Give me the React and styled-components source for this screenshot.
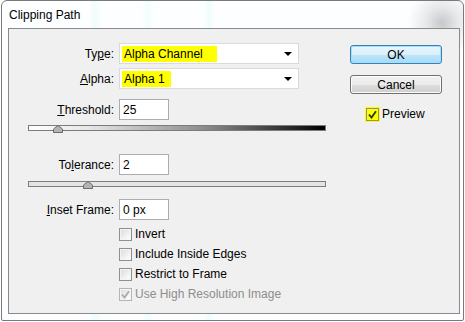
import React from 'react';
import styled, { createGlobalStyle } from 'styled-components';

const GlobalStyle = createGlobalStyle`
  html, body {
    margin: 0;
    padding: 0;
    background: #ffffff;
  }
  body {
    font-family: "Liberation Sans", Arial, sans-serif;
    font-size: 12px;
    color: #000;
  }
`;

const Window = styled.div`
  box-sizing: border-box;
  width: 463px;
  height: 321px;
  margin-left: 1px;
  border: 1px solid #7a7a7a;
  border-radius: 6px 6px 2px 2px;
  display: flex;
  flex-direction: column;
  background:
    radial-gradient(circle at 440px 22px, #c6c9cc 0, #e6e8ea 16px, rgba(255, 255, 255, 0) 34px),
    linear-gradient(90deg, rgba(255,255,255,0) 88px, #eefcfd 92px, rgba(255,255,255,0) 100px),
    linear-gradient(90deg, rgba(255,255,255,0) 140px, #f2fdfe 146px, rgba(255,255,255,0) 152px),
    linear-gradient(90deg, rgba(255,255,255,0) 202px, #eefcfd 207px, rgba(255,255,255,0) 212px),
    #fcfeff;
`;

const TitleBar = styled.div`
  height: 27px;
  display: flex;
  align-items: center;
  padding-left: 7px;
  font-size: 12px;
  color: #000;
`;

const Panel = styled.div`
  flex: 1;
  margin: 0 3px 6px 6px;
  border: 1px solid #8a8a8a;
  background: #f0f0f0;
  display: flex;
  padding: 14px 0 0 19px;
`;

const Form = styled.div`
  width: 298px;
  display: flex;
  flex-direction: column;
`;

const Row = styled.div`
  display: grid;
  grid-template-columns: 86px 180px;
  column-gap: 5px;
  align-items: center;
  margin-top: ${(p) => p.$mt || 0}px;
`;

const Label = styled.label`
  text-align: right;
  white-space: nowrap;
`;

const Select = styled.div`
  box-sizing: border-box;
  height: 21px;
  border: 1px solid #dadada;
  background: #fff;
  display: flex;
  align-items: center;
  justify-content: space-between;
  padding: 0 5px 0 2px;
`;

const Marked = styled.span`
  background: #ffff00;
  padding: 2px ${(p) => p.$pr}px 1px 2px;
  line-height: 13px;
`;

const Arrow = styled.span`
  width: 0;
  height: 0;
  border-left: 4px solid transparent;
  border-right: 4px solid transparent;
  border-top: 4px solid #000;
  margin-right: 1px;
`;

const TextInput = styled.div`
  box-sizing: border-box;
  width: 50px;
  height: 21px;
  border: 1px solid #abadb3;
  background: #fff;
  display: flex;
  align-items: center;
  padding-left: 3px;
`;

const Track = styled.div`
  position: relative;
  box-sizing: border-box;
  width: 298px;
  height: 6px;
  margin-top: ${(p) => p.$mt}px;
  border: 1px solid #7c7c7c;
  background: ${(p) =>
    p.$gradient
      ? 'linear-gradient(90deg, #ffffff 0%, #e6e6e6 20%, #8a8a8a 60%, #000000 100%)'
      : '#e4e4e4'};
`;

const Thumb = styled.svg`
  position: absolute;
  top: -1px;
  width: 10px;
  height: 8px;
`;

const Checks = styled.div`
  display: flex;
  flex-direction: column;
  margin-top: 4px;
  padding-left: 91px;
`;

const CheckRow = styled.div`
  height: 20px;
  display: flex;
  align-items: center;
  gap: 3px;
  color: ${(p) => (p.$disabled ? '#8d8d8d' : '#000')};
`;

const Box = styled.span`
  box-sizing: border-box;
  width: 13px;
  height: 13px;
  border: 1px solid ${(p) => (p.$disabled ? '#b5b5b5' : '#8e8f8f')};
  background: ${(p) =>
    p.$marked
      ? '#ffff00'
      : 'linear-gradient(135deg, #dadada 0%, #f6f6f6 70%, #ffffff 100%)'};
  box-shadow: ${(p) => (p.$marked ? 'none' : 'inset 0 0 0 1px #f4f4f4')};
  display: flex;
  align-items: center;
  justify-content: center;
  outline: ${(p) => (p.$marked ? '1px solid #ffff00' : 'none')};
`;

const Side = styled.div`
  width: 92px;
  margin-left: 24px;
  padding-top: 2px;
  display: flex;
  flex-direction: column;
`;

const Button = styled.div`
  box-sizing: border-box;
  height: 19px;
  border: 1px solid ${(p) => (p.$primary ? '#3c7fb1' : '#707070')};
  border-radius: 3px;
  background: ${(p) =>
    p.$primary
      ? 'linear-gradient(180deg, #eaf6fd 0%, #d9f0fc 50%, #bee6fd 51%, #a7d9f5 100%)'
      : 'linear-gradient(180deg, #f2f2f2 0%, #ebebeb 50%, #dddddd 51%, #cfcfcf 100%)'};
  box-shadow: inset 0 0 0 1px ${(p) => (p.$primary ? '#9fe0fc' : '#fcfcfc')};
  display: flex;
  align-items: center;
  justify-content: center;
  margin-top: ${(p) => p.$mt || 0}px;
`;

const Preview = styled(CheckRow)`
  margin-top: 10px;
  padding-left: 16px;
`;

const ThumbIcon = ({ left }) => (
  <Thumb style={{ left }} viewBox="0 0 10 8">
    <path d="M5 0.5 L9.5 4 L9.5 7.5 L0.5 7.5 L0.5 4 Z" fill="#b4b4b4" stroke="#6d6d6d" strokeWidth="1" />
  </Thumb>
);

const Tick = ({ color }) => (
  <svg width="9" height="9" viewBox="0 0 9 9">
    <path d="M1 4.5 L3.5 7.5 L8 1.2" fill="none" stroke={color} strokeWidth="1.8" />
  </svg>
);

const Check = ({ label, checked, disabled, marked }) => (
  <CheckRow $disabled={disabled}>
    <Box $disabled={disabled} $marked={marked}>
      {checked && <Tick color={disabled ? '#a9a9a9' : '#1f3d12'} />}
    </Box>
    <span>{label}</span>
  </CheckRow>
);

export default function App() {
  return (
    <>
      <GlobalStyle />
      <Window>
        <TitleBar>Clipping Path</TitleBar>
        <Panel>
          <Form>
            <Row>
              <Label>
                Ty<u>p</u>e:
              </Label>
              <Select>
                <Marked $pr={14}>Alpha Channel</Marked>
                <Arrow />
              </Select>
            </Row>
            <Row $mt={4}>
              <Label>
                <u>A</u>lpha:
              </Label>
              <Select>
                <Marked $pr={6}>Alpha 1</Marked>
                <Arrow />
              </Select>
            </Row>
            <Row $mt={10}>
              <Label>
                <u>T</u>hreshold:
              </Label>
              <TextInput>25</TextInput>
            </Row>
            <Track $gradient $mt={5}>
              <ThumbIcon left={24} />
            </Track>
            <Row $mt={23}>
              <Label>
                To<u>l</u>erance:
              </Label>
              <TextInput>2</TextInput>
            </Row>
            <Track $mt={6}>
              <ThumbIcon left={54} />
            </Track>
            <Row $mt={12}>
              <Label>
                <u>I</u>nset Frame:
              </Label>
              <TextInput>0 px</TextInput>
            </Row>
            <Checks>
              <Check label="Invert" />
              <Check label="Include Inside Edges" />
              <Check label="Restrict to Frame" />
              <Check label="Use High Resolution Image" checked disabled />
            </Checks>
          </Form>
          <Side>
            <Button $primary>OK</Button>
            <Button $mt={11}>Cancel</Button>
            <Preview>
              <Box $marked>
                <Tick color="#1f3d12" />
              </Box>
              <span>Preview</span>
            </Preview>
          </Side>
        </Panel>
      </Window>
    </>
  );
}
